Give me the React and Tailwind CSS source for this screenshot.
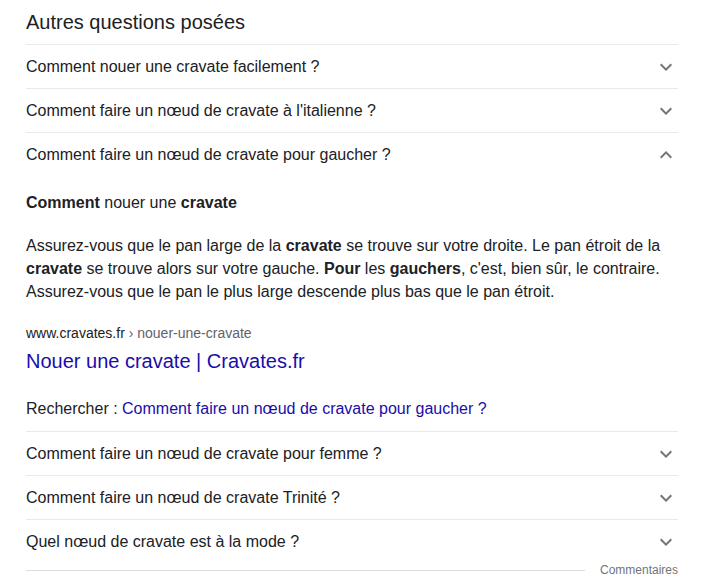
const questionsTop = [
  "Comment nouer une cravate facilement ?",
  "Comment faire un nœud de cravate à l'italienne ?",
];

const questionsBottom = [
  "Comment faire un nœud de cravate pour femme ?",
  "Comment faire un nœud de cravate Trinité ?",
  "Quel nœud de cravate est à la mode ?",
];

function Chevron({ up }) {
  return (
    <svg
      xmlns="http://www.w3.org/2000/svg"
      viewBox="0 0 24 24"
      className={"w-6 h-6 fill-[#70757a] " + (up ? "rotate-180" : "")}
    >
      <path d="M16.59 8.59L12 13.17 7.41 8.59 6 10l6 6 6-6z" />
    </svg>
  );
}

function Row({ text, up }) {
  return (
    <div className="box-border h-[44px] border-t border-[#e8eaed] flex items-center justify-between">
      <span className="text-[16px] leading-[22px] text-[#202124]">{text}</span>
      <Chevron up={up} />
    </div>
  );
}

function App() {
  return (
    <div className="bg-white w-[706px] h-[578px] overflow-hidden font-['Liberation_Sans',Arial,sans-serif]">
      <div className="ml-[26px] w-[652px]">
        <div className="h-[44px] flex items-center">
          <h2 className="text-[20px] leading-[26px] text-[#202124]">
            Autres questions posées
          </h2>
        </div>
        {questionsTop.map((q) => (
          <Row key={q} text={q} />
        ))}
        <Row text="Comment faire un nœud de cravate pour gaucher ?" up />

        {/* contenu déplié */}
        <div className="pb-[11px] text-[#202124]">
          <div className="mt-[16px] text-[16px] leading-[22px]">
            <b className="font-bold">Comment</b> nouer une{" "}
            <b className="font-bold">cravate</b>
          </div>
          <p className="mt-[20px] text-[16px] leading-[23px]">
            Assurez-vous que le pan large de la{" "}
            <b className="font-bold">cravate</b> se trouve sur votre droite. Le
            pan étroit de la <b className="font-bold">cravate</b> se trouve
            alors sur votre gauche. <b className="font-bold">Pour</b> les{" "}
            <b className="font-bold">gauchers</b>, c'est, bien sûr, le
            contraire. Assurez-vous que le pan le plus large descende plus bas
            que le pan étroit.
          </p>
          <div className="mt-[20px] text-[14px] leading-[20px]">
            <span className="text-[#202124]">www.cravates.fr</span>
            <span className="text-[#5f6368]"> › nouer-une-cravate</span>
          </div>
          <a
            href="#"
            className="block mt-[5px] text-[20px] leading-[26px] text-[#1a0dab]"
          >
            Nouer une cravate | Cravates.fr
          </a>
          <div className="mt-[24px] text-[16px] leading-[22px]">
            Rechercher :{" "}
            <a href="#" className="text-[#1a0dab]">
              Comment faire un nœud de cravate pour gaucher ?
            </a>
          </div>
        </div>

        {questionsBottom.map((q) => (
          <Row key={q} text={q} />
        ))}

        <div className="h-[14px] flex items-center">
          <div className="flex-1 h-px bg-[#dadce0]" />
          <span className="ml-[15px] text-[12px] leading-[14px] text-[#70757a]">
            Commentaires
          </span>
        </div>
      </div>
    </div>
  );
}

export default App;
